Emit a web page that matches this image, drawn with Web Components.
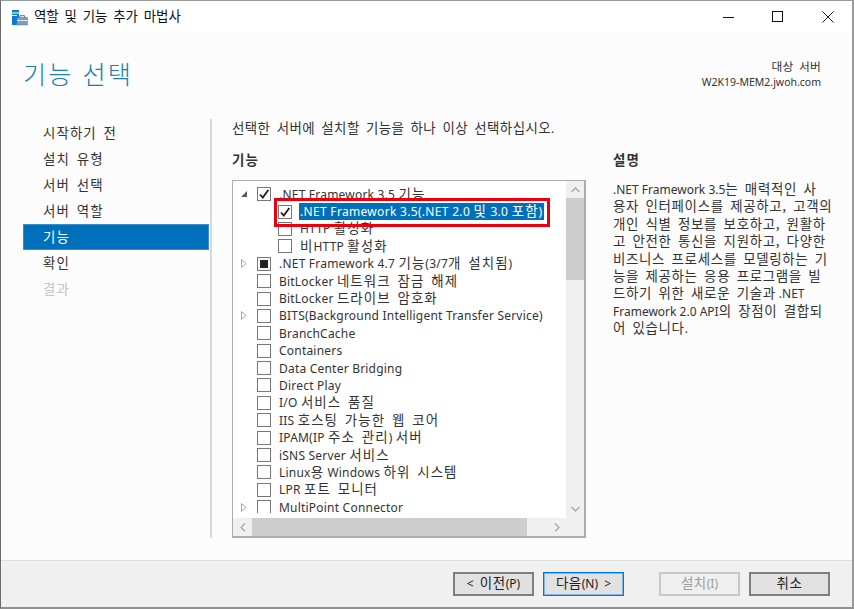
<!DOCTYPE html>
<html lang="ko"><head><meta charset="utf-8"><title>역할 및 기능 추가 마법사</title>
<style>
html,body{margin:0;padding:0;background:#fff}
body{font:12px/17.4px "Noto Sans","Noto Sans CJK KR",sans-serif;color:#222;width:854px;height:609px;overflow:hidden}
</style></head><body>
<template id="t-ko"><style>
:host{display:inline;font-family:"Noto Sans CJK KR",sans-serif;font-size:1.12em;letter-spacing:var(--ko-ls,.08em);word-spacing:var(--ko-ws,.15em);line-height:1}
</style><slot></slot></template>

<template id="t-window"><style>
:host{display:flex;flex-direction:column;width:854px;height:609px;box-sizing:border-box;position:relative;background:#fcfcfc;border-left:1px solid #6a6a6a;border-right:2px solid #9a9a9a;border-bottom:2px solid #8f8f8f;border-top:1px solid #9a9a9a}
.main{flex:1;display:flex;min-height:0}
</style><slot name="title"></slot><slot name="head"></slot><div class="main"><slot name="nav"></slot><slot name="content"></slot></div><slot name="foot"></slot></template>

<template id="t-title"><style>
:host{display:flex;align-items:center;height:32px;background:#fff;flex:none;padding-left:10px;color:#111;--ko-ls:0}
svg{flex:none;display:block}
.t{margin-left:6px;flex:1}
.b{width:49px;height:32px;box-sizing:border-box;padding-left:18px;display:flex;align-items:center}
.c{padding-left:19px}
</style><svg width="17" height="17" viewBox="0 0 17 17"><path d="M1 1h7v2.500H1z" fill="#0c7cd0"/><path d="M1 4.500h7V16H1z" fill="#0a7ad2"/><path d="M1 6h5v1H1z" fill="#fff"/><path d="M6 8.500h10.500V16H6z" fill="#7e9fb6" stroke="#5f7f97" stroke-width=".6"/><path d="M9 8.500V6.700h4.500v1.800" fill="none" stroke="#6a6a6a" stroke-width="1"/><path d="M6 11.500h10.500" stroke="#dfe8ee" stroke-width="1"/></svg><span class="t"><slot></slot></span>
<span class="b"><svg width="12" height="12" viewBox="0 0 12 12"><path d="M0 6.500h11" stroke="#111"/></svg></span>
<span class="b"><svg width="12" height="12" viewBox="0 0 12 12"><rect x=".5" y=".5" width="10" height="10" fill="none" stroke="#111"/></svg></span>
<span class="b c"><svg width="12" height="12" viewBox="0 0 12 12"><path d="M.5.500l11 11M11.500.500l-11 11" stroke="#222"/></svg></span></template>

<template id="t-head"><style>
:host{display:flex;justify-content:space-between;height:67px;flex:none;padding:0 31px 0 22px;background:#fcfcfc}
h1{margin:0;font-weight:300;font-size:22.500px;line-height:34px;color:#1a80a8;padding-top:26px;--ko-ws:0}
.s{text-align:right;font-size:10.500px;line-height:15px;padding-top:27px;color:#333;--ko-ls:.02em}
</style><h1><slot name="h"></slot></h1><div class="s"><slot name="s"></slot></div></template>

<template id="t-nav"><style>
:host{display:block;width:187px;flex:none;padding:20px 0 0 22px}
::slotted(*){display:block}
</style><slot></slot></template>

<template id="t-navitem"><style>
:host{display:block;height:26px;line-height:28px;width:186px;padding-left:20px;box-sizing:border-box;color:#333;overflow:hidden}
:host([sel]){background:#0070bb;color:#fff;border:1px solid #3a8fc8;padding-left:19px;line-height:26px}
:host([dis]){color:#c4c4c4}
</style><slot></slot></template>

<template id="t-content"><style>
:host{display:flex;flex:1;min-width:0;border-left:2px solid #d8d8d8;margin:19px 0 22px 0}
.col{width:354px;flex:none;margin-left:20px}
.intro{line-height:18px;color:#333;height:20px;padding-top:1px;white-space:nowrap;--ko-ls:.033em}
.lab{font-weight:700;line-height:18px;margin-top:12px;height:28px;color:#333}
.side{width:209px;margin:34px 0 0 27px;box-sizing:border-box;white-space:nowrap}
.side b{display:block;font-weight:700;line-height:18px;height:29px;color:#333;margin-top:-1px}
.desc{line-height:17.400px;color:#333;--ko-ls:.05em}
</style><div class="col"><div class="intro"><slot name="intro"></slot></div><div class="lab"><slot name="lab"></slot></div><slot name="tree"></slot></div><div class="side"><b><slot name="sidet"></slot></b><div class="desc"><slot name="desc"></slot></div></div></template>

<template id="t-tree"><style>
:host{display:block;position:relative;width:354px;height:358px;box-sizing:border-box;background:#fff;border:solid #acacac;border-width:1px 2px 2px 1px}
.list{position:absolute;left:0;top:4px;padding-top:.5px;width:334px;height:327.500px;overflow:hidden}
.sv{position:absolute;right:0;top:0;width:18px;bottom:18px;background:#f0f0f0}
.sv i{position:absolute;left:0;right:0;top:17px;height:82px;background:#cdcdcd;display:block}
.sh{position:absolute;left:0;bottom:0;right:0;height:18px;background:#f0f0f0}
.sh i{position:absolute;left:19px;width:275px;top:0;bottom:0;background:#cdcdcd;display:block}
svg{position:absolute}
.mark{position:absolute;left:41px;top:17px;width:276px;height:29px;box-sizing:border-box;border:3px solid #e8000f;pointer-events:none}
</style><div class="list"><slot></slot></div>
<div class="sv"><svg style="left:5px;top:6px" width="9" height="6" viewBox="0 0 9 6"><path d="M.5 5L4.500 1l4 4" fill="none" stroke="#a6a6a6" stroke-width="1.300"/></svg><i></i><svg style="left:5px;bottom:6px" width="9" height="6" viewBox="0 0 9 6"><path d="M.5 1l4 4 4-4" fill="none" stroke="#a6a6a6" stroke-width="1.300"/></svg></div>
<div class="sh"><svg style="left:7px;top:5px" width="6" height="9" viewBox="0 0 6 9"><path d="M5 .5l-4 4 4 4" fill="none" stroke="#a6a6a6" stroke-width="1.300"/></svg><i></i><svg style="right:24px;top:5px" width="6" height="9" viewBox="0 0 6 9"><path d="M1 .5l4 4-4 4" fill="none" stroke="#a6a6a6" stroke-width="1.300"/></svg></div>
<div class="mark"></div></template>

<template id="t-row"><style>
:host{display:flex;align-items:center;height:17.400px;white-space:nowrap;color:#333;letter-spacing:.21px}
:host([sel]){letter-spacing:.31px}
.a{width:10px;flex:none;margin-left:var(--ml,6px);margin-right:8px;height:10px;display:flex;align-items:center;justify-content:center}
.box{width:14px;height:14px;box-sizing:border-box;border:1px solid #777;background:#fff;flex:none;margin-right:7px;display:flex;align-items:center;justify-content:center}
:host([lvl="1"]){--ml:27px}
.t{padding:0 1px;line-height:17px}
:host([sel]) .t{background:#0070bb;color:#fff}
svg{display:block}
</style><span class="a" id="a"></span><span class="box" id="b"></span><span class="t"><slot></slot></span></template>

<template id="t-foot"><style>
:host{display:flex;height:47px;flex:none;box-sizing:border-box;background:#f0f0f0;border-top:1px solid #dfdfdf;padding:11px 21px 0 452px}
::slotted(:nth-child(3)){margin-left:35px}
::slotted(:nth-child(2)){margin-left:9px}
::slotted(:nth-child(4)){margin-left:9px}
</style><slot></slot></template>

<template id="t-btn"><style>
:host{display:flex;align-items:center;justify-content:center;width:81px;height:24px;box-sizing:border-box;border:2px solid #7f7f7f;background:#e1e1e1;color:#222;white-space:nowrap;word-spacing:3px;--ko-ls:.04em}
:host([pri]){border:1px solid #0078d7;box-shadow:inset 0 0 0 1px #7db6e6}
:host([dis]){border-color:#c8c8c8;background:#efefef;color:#9c9c9c}
</style><span><slot></slot></span></template>

<wizard-window>
<title-bar slot="title">역할 및 기능 추가 마법사</title-bar>
<wizard-head slot="head"><span slot="h">기능 선택</span><span slot="s">대상 서버<br>W2K19-MEM2.jwoh.com</span></wizard-head>
<wizard-nav slot="nav">
<nav-item>시작하기 전</nav-item><nav-item>설치 유형</nav-item><nav-item>서버 선택</nav-item><nav-item>서버 역할</nav-item><nav-item sel>기능</nav-item><nav-item>확인</nav-item><nav-item dis>결과</nav-item>
</wizard-nav>
<wizard-content slot="content">
<span slot="intro">선택한 서버에 설치할 기능을 하나 이상 선택하십시오.</span>
<span slot="lab">기능</span>
<feature-tree slot="tree">
<tree-row arrow="open" check="on">.NET Framework 3.5 기능</tree-row>
<tree-row lvl="1" check="on" sel>.NET Framework 3.5(.NET 2.0 및 3.0 포함)</tree-row>
<tree-row lvl="1">HTTP 활성화</tree-row>
<tree-row lvl="1">비HTTP 활성화</tree-row>
<tree-row arrow="closed" check="part">.NET Framework 4.7 기능(3/7개 설치됨)</tree-row>
<tree-row>BitLocker 네트워크 잠금 해제</tree-row>
<tree-row>BitLocker 드라이브 암호화</tree-row>
<tree-row arrow="closed">BITS(Background Intelligent Transfer Service)</tree-row>
<tree-row>BranchCache</tree-row>
<tree-row>Containers</tree-row>
<tree-row>Data Center Bridging</tree-row>
<tree-row>Direct Play</tree-row>
<tree-row>I/O 서비스 품질</tree-row>
<tree-row>IIS 호스팅 가능한 웹 코어</tree-row>
<tree-row>IPAM(IP 주소 관리) 서버</tree-row>
<tree-row>iSNS Server 서비스</tree-row>
<tree-row>Linux용 Windows 하위 시스템</tree-row>
<tree-row>LPR 포트 모니터</tree-row>
<tree-row arrow="closed">MultiPoint Connector</tree-row>
</feature-tree>
<span slot="sidet">설명</span>
<span slot="desc">.NET Framework 3.5는 매력적인 사<br>용자 인터페이스를 제공하고, 고객의<br>개인 식별 정보를 보호하고, 원활하<br>고 안전한 통신을 지원하고, 다양한<br>비즈니스 프로세스를 모델링하는 기<br>능을 제공하는 응용 프로그램을 빌<br>드하기 위한 새로운 기술과 .NET<br>Framework 2.0 API의 장점이 결합되<br>어 있습니다.</span>
</wizard-content>
<wizard-foot slot="foot"><wiz-btn>&lt; 이전(P)</wiz-btn><wiz-btn pri>다음(N) &gt;</wiz-btn><wiz-btn dis>설치(I)</wiz-btn><wiz-btn>취소</wiz-btn></wizard-foot>
</wizard-window>
<script>
function def(name,tpl,init){customElements.define(name,class extends HTMLElement{constructor(){super();this.attachShadow({mode:'open'}).appendChild(document.getElementById(tpl).content.cloneNode(true));}connectedCallback(){if(init)init(this)}})}
def('ko-t','t-ko');
def('wizard-window','t-window');def('title-bar','t-title');def('wizard-head','t-head');def('wizard-nav','t-nav');def('nav-item','t-navitem');def('wizard-content','t-content');def('feature-tree','t-tree');def('wizard-foot','t-foot');def('wiz-btn','t-btn');
def('tree-row','t-row',function(el){
var r=el.shadowRoot,a=el.getAttribute('arrow'),c=el.getAttribute('check');
if(a==='open')r.getElementById('a').innerHTML='<svg width="8" height="8" viewBox="0 0 8 8"><path d="M7 1v6H1z" fill="#595959"/></svg>';
if(a==='closed')r.getElementById('a').innerHTML='<svg width="6" height="9" viewBox="0 0 6 9"><path d="M.5.500l4.500 4-4.500 4z" fill="#fff" stroke="#a6a6a6"/></svg>';
if(c==='on')r.getElementById('b').innerHTML='<svg width="12" height="12" viewBox="0 0 12 12"><path d="M2 6.500l2.800 3L10.300 2" fill="none" stroke="#1a1a1a" stroke-width="1.800"/></svg>';
if(c==='part')r.getElementById('b').innerHTML='<span style="display:block;width:8px;height:8px;background:#222"></span>';
});
(function(){
var w=document.createTreeWalker(document.querySelector('wizard-window'),NodeFilter.SHOW_TEXT),n,list=[];
while(n=w.nextNode())if(/[\uAC00-\uD7A3]/.test(n.nodeValue))list.push(n);
var re=/[\uAC00-\uD7A3]+(?:,? [\uAC00-\uD7A3]+)*/g;
list.forEach(function(t){
var s=t.nodeValue,f=document.createDocumentFragment(),i=0,m;re.lastIndex=0;
while(m=re.exec(s)){if(m.index>i)f.appendChild(document.createTextNode(s.slice(i,m.index)));var k=document.createElement('ko-t');k.textContent=m[0];f.appendChild(k);i=m.index+m[0].length}
if(i<s.length)f.appendChild(document.createTextNode(s.slice(i)));
t.parentNode.replaceChild(f,t);
});
})();
</script>
</body></html>
